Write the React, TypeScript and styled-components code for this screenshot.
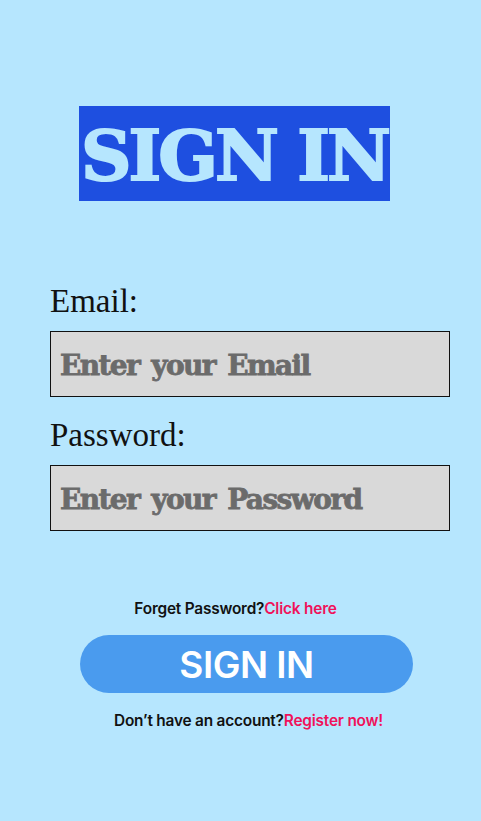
import React from "react";
import styled, { createGlobalStyle } from "styled-components";

const Global = createGlobalStyle`
  html, body { margin: 0; padding: 0; background: #b6e6fe; }
  * { box-sizing: border-box; }
`;

const Page = styled.div`
  width: 481px;
  height: 821px;
  background: #b6e6fe;
  display: flex;
  flex-direction: column;
  align-items: center;
  padding-top: 106px;
`;

const TitleBox = styled.h1`
  margin: 0 0 0 79px;
  align-self: flex-start;
  width: 311px;
  height: 95px;
  background: #1e4fe0;
  color: #b6e6fe;
  font-family: "DejaVu Serif", serif;
  font-weight: 700;
  font-size: 70px;
  letter-spacing: -3px;
  -webkit-text-stroke: 2px #b6e6fe;
  display: flex;
  align-items: center;
  justify-content: center;
  white-space: nowrap;
  padding-top: 4px;
`;

const Form = styled.div`
  width: 400px;
  margin-top: 82px;
  display: flex;
  flex-direction: column;
  align-self: flex-start;
  margin-left: 50px;
`;

const Label = styled.label`
  font-family: "Liberation Serif", serif;
  font-size: 33px;
  color: #111;
  line-height: 36px;
  margin-bottom: 12px;
`;

const Field = styled.div<{ $gap?: number }>`
  height: 66px;
  border: 1px solid #111;
  background: #d9d9d9;
  display: flex;
  align-items: center;
  padding-left: 9px;
  padding-top: 2px;
  margin-bottom: ${(p) => p.$gap ?? 0}px;
  font-family: "DejaVu Serif", serif;
  font-weight: 700;
  font-size: 28px;
  color: #6b6b6b;
  -webkit-text-stroke: 0.8px #6b6b6b;
  word-spacing: 4px;
  letter-spacing: -1.6px;
`;

const Footer = styled.div`
  display: flex;
  flex-direction: column;
  align-items: center;
  margin-top: 68px;
`;

const Hint = styled.p<{ $shift?: number }>`
  margin: 0;
  font-family: Inter, "Liberation Sans", sans-serif;
  font-weight: 600;
  font-size: 15.4px;
  color: #111;
  letter-spacing: -0.2px;
  margin-left: ${(p) => p.$shift ?? 0}px;
`;

const Link = styled.span`
  color: #f0125a;
`;

const Button = styled.button`
  margin: 17px 0 18px 12px;
  width: 333px;
  height: 58px;
  border: none;
  border-radius: 29px;
  background: #4a9bee;
  color: #fff;
  font-family: Inter, "Liberation Sans", sans-serif;
  font-weight: 600;
  font-size: 37px;
  letter-spacing: -0.5px;
  display: flex;
  align-items: center;
  justify-content: center;
`;

export default function App() {
  return (
    <>
      <Global />
      <Page>
        <TitleBox>SIGN IN</TitleBox>
        <Form>
          <Label>Email:</Label>
          <Field $gap={20}>Enter your Email</Field>
          <Label>Password:</Label>
          <Field>Enter your Password</Field>
        </Form>
        <Footer>
          <Hint $shift={-10}>
            Forget Password?<Link>Click here</Link>
          </Hint>
          <Button>SIGN IN</Button>
          <Hint $shift={16}>
            Don’t have an account?<Link>Register now!</Link>
          </Hint>
        </Footer>
      </Page>
    </>
  );
}
